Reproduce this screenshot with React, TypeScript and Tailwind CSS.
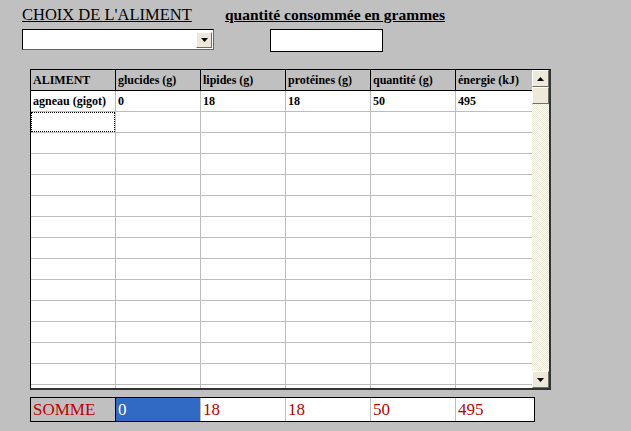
import React from 'react';

const cols = ['ALIMENT', 'glucides (g)', 'lipides (g)', 'protéines (g)', 'quantité (g)', 'énergie (kJ)'];
const firstRow = ['agneau (gigot)', '0', '18', '18', '50', '495'];
const sums = ['0', '18', '18', '50', '495'];
const widths = ['w-[85px]', 'w-[85px]', 'w-[85px]', 'w-[85px]', 'w-[85px]', 'w-[77px]'];

const Arrow: React.FC<{ down?: boolean }> = ({ down }) => (
  <svg width="7" height="4" viewBox="0 0 7 4" className="block">
    {down ? <polygon points="0,0 7,0 3.5,4" fill="#000" /> : <polygon points="0,4 7,4 3.5,0" fill="#000" />}
  </svg>
);

const ScrollButton: React.FC<{ down?: boolean }> = ({ down }) => (
  <div className="w-[17px] h-[17px] bg-[#ece9d8] border border-t-white border-l-white border-r-[#716f64] border-b-[#716f64] flex items-center justify-center">
    <Arrow down={down} />
  </div>
);

const App: React.FC = () => {
  const emptyRows = Array.from({ length: 14 });

  return (
    <div className="w-[631px] h-[431px] bg-[#c0c0c0] relative overflow-hidden font-['Liberation_Serif','Times_New_Roman',serif]">
      <div className="flex items-baseline pl-[22px] pt-[6px] h-[23px] leading-[17px]">
        <span className="w-[203px] shrink-0 text-[16.5px] leading-[17px] underline text-black whitespace-nowrap">CHOIX DE L'ALIMENT</span>
        <span className="text-[15.5px] leading-[17px] font-bold underline text-black whitespace-nowrap">quantité consommée en grammes</span>
      </div>

      <div className="flex items-start pl-[22px] mt-[6px]">
        <div className="w-[192px] h-[21px] bg-white border border-black border-r-[#666] border-b-[#666] flex justify-end items-center pr-[1px]">
          <div className="w-[16px] h-[16px] bg-[#ece9d8] border border-t-white border-l-white border-r-[#716f64] border-b-[#716f64] flex items-center justify-center">
            <Arrow down />
          </div>
        </div>
        <div className="ml-[56px] w-[113px] h-[23px] bg-white border border-black" />
      </div>

      {/* grille */}
      <div className="ml-[30px] mt-[17px] w-[521px] h-[321px] border border-black border-r-2 border-b-2 border-r-[#333] border-b-[#333] flex bg-white">
        <div className="w-[502px] overflow-hidden">
          <div className="flex h-[21px] bg-[#c0c0c0] border-b border-black">
            {cols.map((c, i) => (
              <div key={c} className={`${widths[i]} shrink-0 h-full ${i < 5 ? 'border-r border-black' : ''} px-[2px] text-[12px] leading-[20px] font-bold text-black whitespace-nowrap`}>
                {c}
              </div>
            ))}
          </div>
          <div className="flex h-[21px] border-b border-[#bdbdbd]">
            {firstRow.map((c, i) => (
              <div key={i} className={`${widths[i]} shrink-0 h-full ${i < 5 ? 'border-r border-[#bdbdbd]' : ''} px-[2px] text-[12px] leading-[20px] font-bold text-black whitespace-nowrap`}>
                {c}
              </div>
            ))}
          </div>
          {emptyRows.map((_, r) => (
            <div key={r} className="flex h-[21px] border-b border-[#bdbdbd]">
              {widths.map((w, i) => (
                <div key={i} className={`${w} shrink-0 h-full ${i < 5 ? 'border-r border-[#bdbdbd]' : ''}`}>
                  {r === 0 && i === 0 && <div className="w-full h-full border border-dotted border-black" />}
                </div>
              ))}
            </div>
          ))}
        </div>
        <div className="w-[17px] h-full flex flex-col [background:repeating-conic-gradient(#ffffff_0%_25%,#ece9d8_0%_50%)_0_0/2px_2px]">
          <ScrollButton />
          <div className="w-[17px] h-[17px] bg-[#ece9d8] border border-t-white border-l-white border-r-[#716f64] border-b-[#716f64]" />
          <div className="flex-1" />
          <ScrollButton down />
        </div>
      </div>

      {/* somme */}
      <div className="ml-[30px] mt-[7px] w-[505px] h-[25px] border border-black flex bg-white">
        <div className="w-[85px] shrink-0 h-full bg-[#c0c0c0] border-r border-black px-[2px] text-[17px] leading-[23px] text-[#c00000]">SOMME</div>
        {sums.map((s, i) => (
          <div
            key={i}
            className={`${widths[i + 1]} shrink-0 h-full px-[2px] text-[17px] leading-[23px] ${i === 0 ? 'bg-[#316ac5] text-white' : 'text-[#c00000]'} ${i < 4 ? 'border-r border-[#bdbdbd]' : ''}`}
          >
            {s}
          </div>
        ))}
      </div>
    </div>
  );
};

export default App;
